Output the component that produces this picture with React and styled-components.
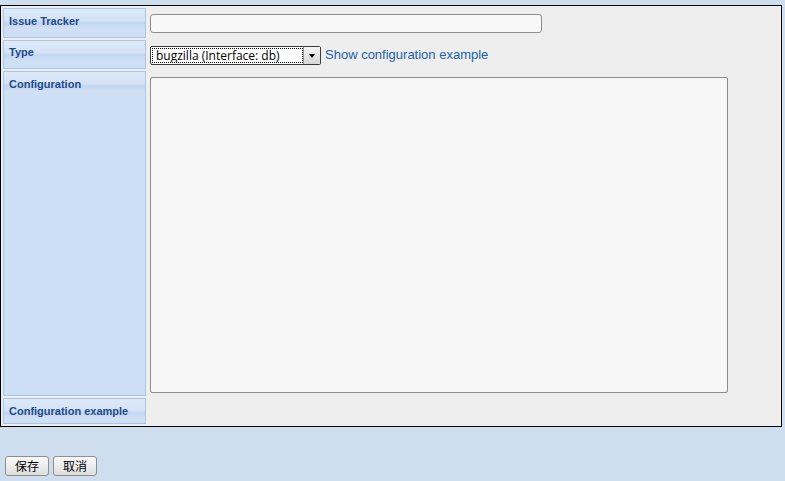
import styled, { createGlobalStyle } from 'styled-components';

const GlobalStyle = createGlobalStyle`
    html, body {
        margin: 0;
        padding: 0;
        background: #cedeee;
        font-family: "Liberation Sans", Arial, sans-serif;
    }
`;

const Page = styled.div`
    padding-top: 5px;
    width: 785px;
    height: 481px;
    box-sizing: border-box;
`;

const Panel = styled.div`
    width: 782px;
    box-sizing: border-box;
    border: 1px solid #000;
    background: #eeeeee;
    padding: 2px 0 2px 2px;
    display: grid;
    grid-template-columns: 143px 1fr;
    row-gap: 2px;
`;

const Label = styled.div`
    box-sizing: border-box;
    border: 1px solid #a7c6ea;
    background-color: #cddff4;
    background-image: linear-gradient(#dde9f8 0%, #d5e3f6 40%, #c3d6f0 50%, #d0e0f4 70%, #cddff4 100%);
    background-size: 100% 28px;
    background-repeat: no-repeat;
    color: #1d4a8c;
    font-size: 11px;
    font-weight: bold;
    padding: ${(p) => (p.$short ? '5px 5px 0' : '6px 5px 0')};
    height: ${(p) => p.$h}px;
`;

const Cell = styled.div`
    padding: 6px 0 0 4px;
    display: flex;
    align-items: flex-start;
    gap: 4px;
`;

const TextInput = styled.div`
    width: 392px;
    height: 19px;
    box-sizing: border-box;
    border: 1px solid #8d8d8d;
    border-radius: 3px;
    background: #f8f8f8;
`;

const Select = styled.div`
    width: 171px;
    height: 19px;
    box-sizing: border-box;
    border: 1px solid #3a3a3a;
    border-radius: 2px;
    background: #fff;
    display: flex;
    font-family: "Open Sans", "DejaVu Sans", sans-serif;
    font-size: 12px;
    color: #000;
`;

const SelectText = styled.div`
    flex: 1;
    margin: 1px 0 1px 1px;
    border: 1px dotted #000;
    padding-left: 3px;
    line-height: 13px;
    white-space: nowrap;
    overflow: hidden;
`;

const Arrow = styled.div`
    width: 16px;
    background: linear-gradient(#f4f4f4, #d8d8d8);
    border-left: 1px solid #9a9a9a;
    display: flex;
    align-items: center;
    justify-content: center;

    &::after {
        content: '';
        border-left: 3px solid transparent;
        border-right: 3px solid transparent;
        border-top: 4px solid #000;
    }
`;

const Link = styled.a`
    color: #1b62aa;
    font-size: 13px;
    text-decoration: none;
    line-height: 18px;
    cursor: pointer;
`;

const TextArea = styled.div`
    width: 578px;
    height: 316px;
    box-sizing: border-box;
    border: 1px solid #8d8d8d;
    border-radius: 2px;
    background: #f7f7f7;
`;

const Footer = styled.div`
    display: flex;
    gap: 4px;
    padding: 29px 0 0 5px;
`;

const Button = styled.button`
    height: 20px;
    width: 44px;
    padding: 0;
    border: 1px solid #8e8e8e;
    border-radius: 3px;
    background: linear-gradient(#fbfbfb, #dedede);
    font-family: "Noto Sans CJK SC", sans-serif;
    font-size: 12px;
    line-height: 16px;
    color: #000;
`;

const App = () => {
    return (
    <Page>
        <GlobalStyle />
        <Panel>
            <Label $h={30}>Issue Tracker</Label>
            <Cell>
                <TextInput />
            </Cell>
            <Label $h={29} $short>Type</Label>
            <Cell>
                <Select>
                    <SelectText>bugzilla (Interface: db)</SelectText>
                    <Arrow />
                </Select>
                <Link>Show configuration example</Link>
            </Cell>
            <Label $h={325}>Configuration</Label>
            <Cell>
                <TextArea />
            </Cell>
            <Label $h={26}>Configuration example</Label>
            <Cell />
        </Panel>
        <Footer>
            <Button>保存</Button>
            <Button>取消</Button>
        </Footer>
    </Page>
    )
}

export default App;
